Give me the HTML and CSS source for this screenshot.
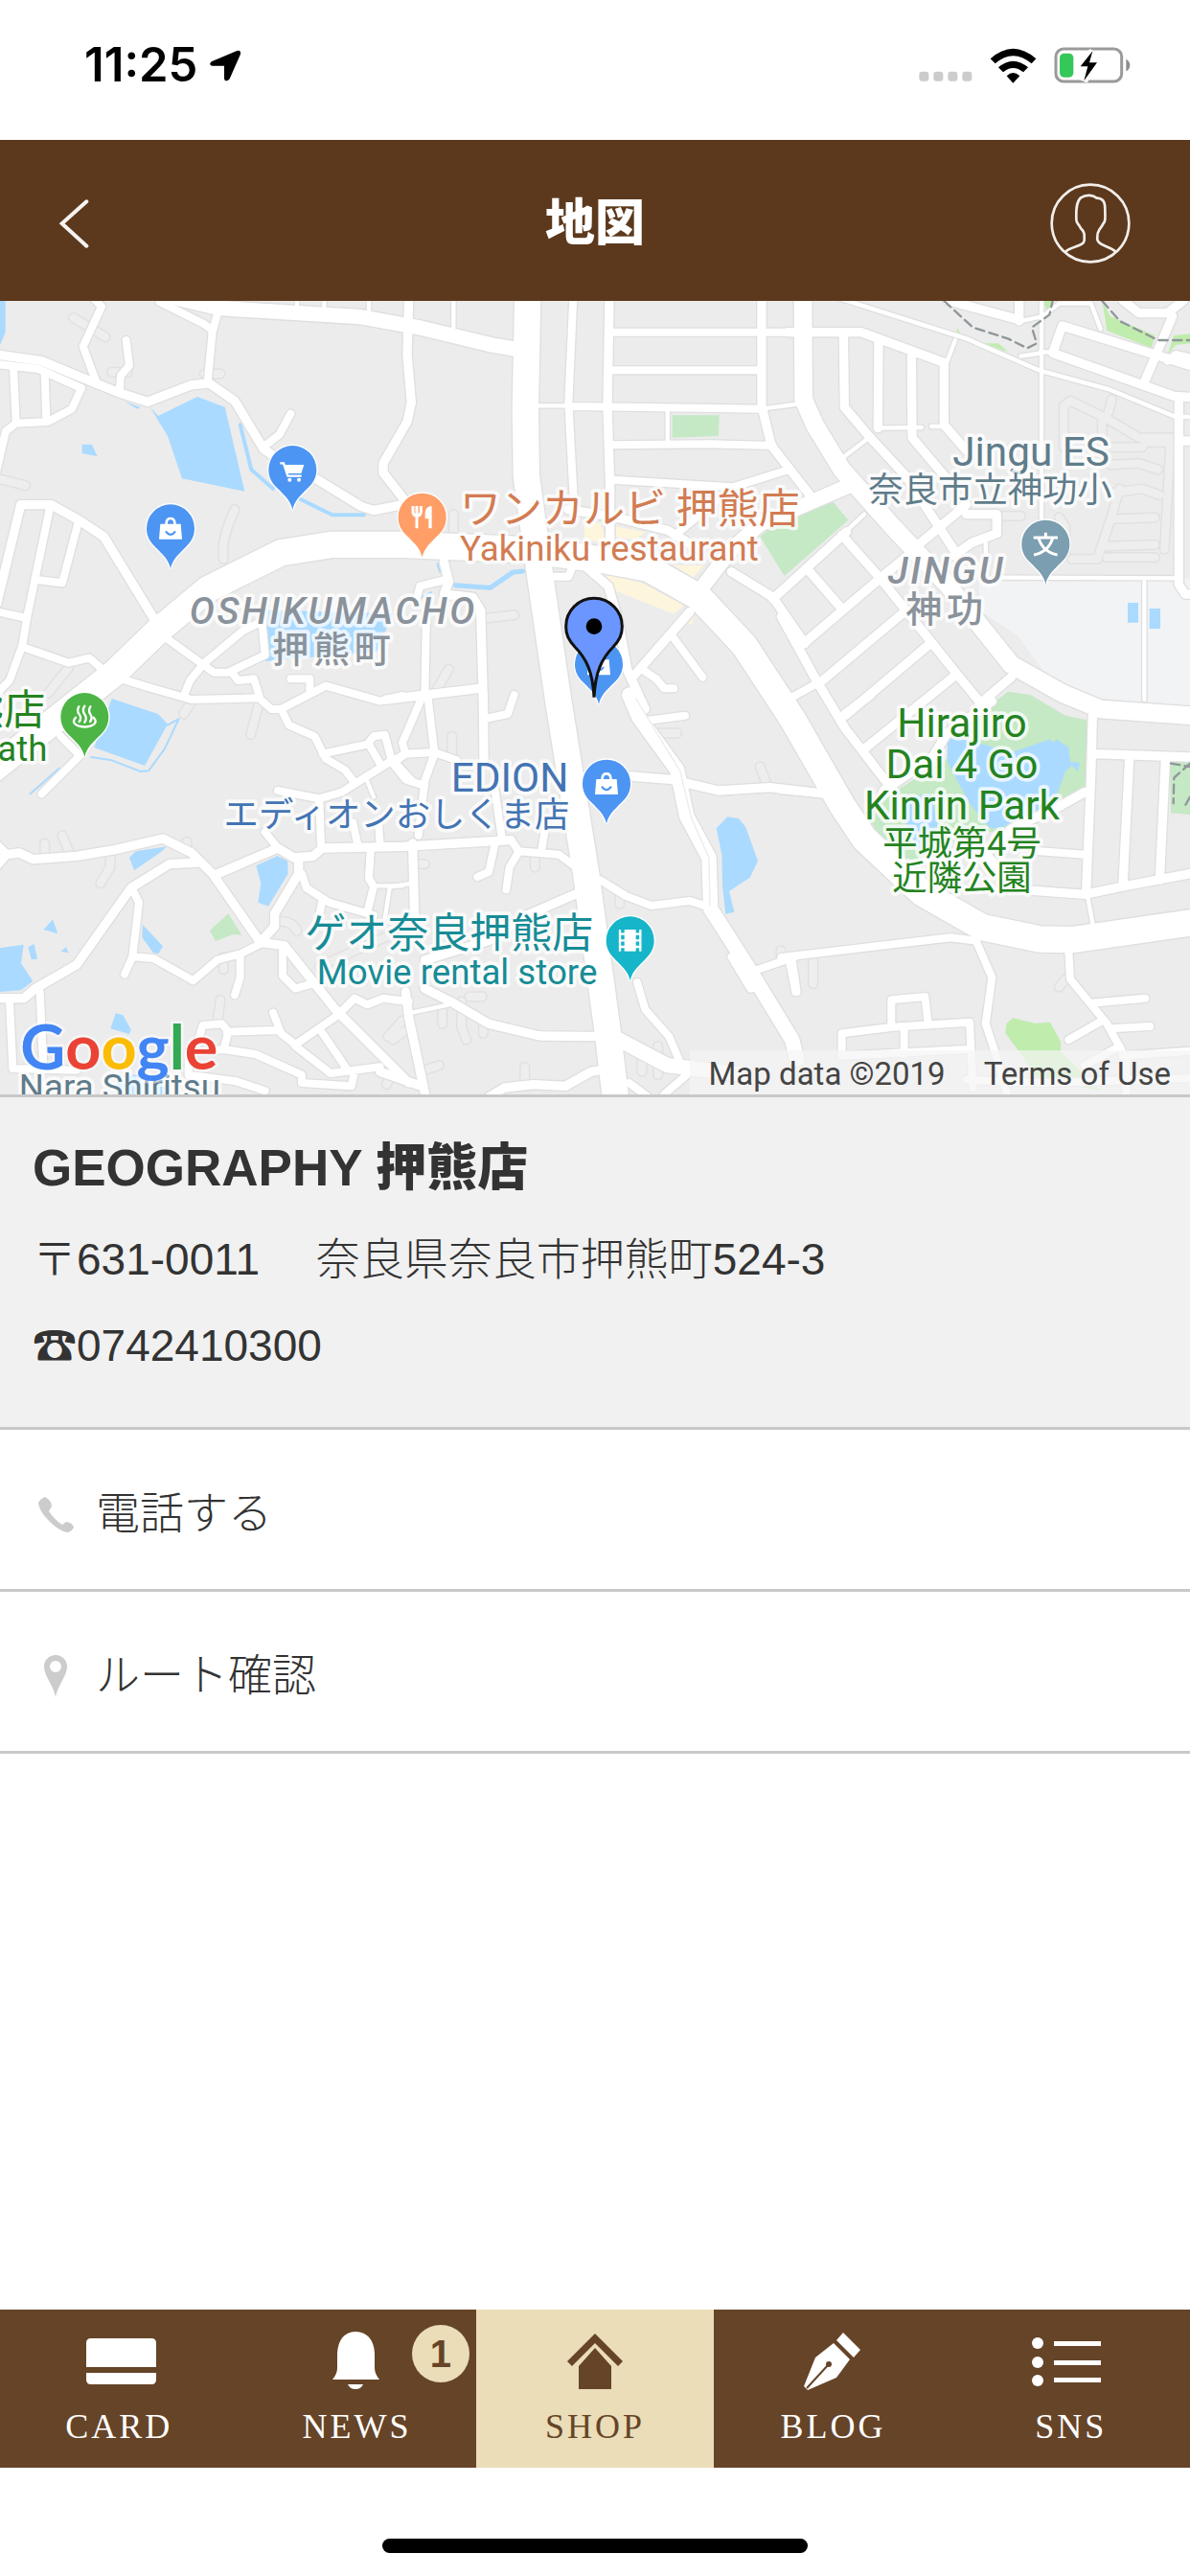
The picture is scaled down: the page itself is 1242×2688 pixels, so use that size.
FILE: index.html
```html
<!DOCTYPE html>
<html lang="ja">
<head>
  <meta charset="UTF-8">
  <meta name="viewport" content="width=device-width, initial-scale=1">
  <title>地図</title>
  <link rel="stylesheet" href="styles.css">
</head>
<body>
  <div class="status-bar">
    <div class="status-left">
      <span class="time">11:25</span>
      <svg class="icon-location" viewBox="510 34 102 98"><path d="M518 70 L596 37 Q611 32 609 47 L575 124 Q570 132 562 130 Q558 128 558 122 V84 H520 Q508 80 518 70Z"/></svg>
    </div>
    <div class="status-right">
      <svg class="icon-signal" viewBox="53 103 168 33" fill="#ccc">
        <rect x="54" y="105" width="30" height="30" rx="9"/>
        <rect x="99" y="105" width="30" height="30" rx="9"/>
        <rect x="144" y="105" width="30" height="30" rx="9"/>
        <rect x="189" y="105" width="30" height="30" rx="9"/>
      </svg>
      <svg class="icon-wifi" viewBox="273 25 147 111">
        <path d="M275 59 Q346 -4 418 59 L404 74 Q346 25 290 74Z"/>
        <path d="M300 86 Q346 46 393 86 L378 101 Q346 75 315 101Z"/>
        <path d="M326 113 Q346 93 367 113 L346 135Z"/>
      </svg>
      <svg class="icon-battery" viewBox="473 25 240 114">
        <rect x="479" y="31" width="206" height="102" rx="24" fill="none" stroke="#9a9a9a" stroke-width="9"/>
        <path d="M699 63 Q711 70 711 82 Q711 95 699 101Z" fill="#8e8e8e"/>
        <rect x="491" y="45" width="43" height="75" rx="14" fill="#34c759"/>
        <path d="M594 38 L556 86 H579 L567 131 L608 74 H584Z" stroke="#fff" stroke-width="22"/>
        <path d="M594 38 L556 86 H579 L567 131 L608 74 H584Z"/>
      </svg>
    </div>
  </div>

  <header class="header">
    <button class="header-btn" type="button" aria-label="戻る">
      <svg class="icon-back" viewBox="36 498 96 156"><path d="M121 508 L44 577 L121 647" fill="none" stroke="#f6f3f1" stroke-width="12" stroke-linecap="round"/></svg>
    </button>
    <h1>地図</h1>
    <button class="header-btn" type="button" aria-label="マイページ">
      <svg class="icon-user" viewBox="466 454 252 252" fill="none" stroke="#f3efec" stroke-width="8">
        <circle cx="592" cy="580" r="121"/>
        <path d="M514 669 C530 652 572 652 573 634 C574 612 573 606 562 596 C556 580 548 582 548 568 C548 548 545 516 562 500 C580 488 602 492 612 501 C640 503 638 525 638 540 C638 556 640 568 636 576 C630 584 628 590 620 600 C613 610 613 620 614 632 C618 650 650 650 672 669"/>
      </svg>
    </button>
  </header>

  <main>
    <section class="map">
      <svg class="map-canvas" viewBox="0 0 3726 2484" role="img" aria-label="押熊店 周辺地図">
        <defs>
          <path id="pin" d="M0 126 C-6 98 -22 84 -48 58 C-65 42 -75 24 -75 0 A75 75 0 0 1 75 0 C75 24 65 42 48 58 C22 84 6 98 0 126Z"/>
          <g id="bag">
            <path d="M-32 -14 H32 L36 34 H-36Z" fill="#fff"/>
            <path d="M-13 -12 V-18 Q-12 -31 0 -31 Q12 -31 13 -18 V-12" fill="none" stroke="#fff" stroke-width="8"/>
            <path d="M-15 9 Q0 30 15 9" fill="none" stroke="#4d95f3" stroke-width="6"/>
          </g>

          <!-- lanes and car parks -->
          <g id="lanes">
            <g transform="translate(0 -12)">
              <path d="M230 65 L330 125 M350 235 H400 M640 240 H690 M0 570 L80 590 M735 665 Q690 760 700 820 M215 1160 L150 1240"/>
            </g>
            <g transform="translate(1230 -12)">
              <path d="M295 1005 L380 995 M175 1165 L130 1240 M190 680 V760"/>
            </g>
            <g transform="translate(2466 -12)">
              <path d="M865 470 V340 L885 325 L990 375 L1100 440 L1200 440 L1180 790 M985 380 V440 M1015 320 L1005 360 M1010 470 L1110 470 L1120 455 H1180 M1010 525 L1100 520 L1160 540 M1020 612 L1110 600 L1165 620 M1020 695 L1150 690 M1000 780 L1150 775 M890 820 L970 820 L990 760 L1010 700 L1040 600 M1000 815 H1150 M850 690 L870 720 V800 M640 685 H730"/>
            </g>
            <g transform="translate(0 1233)">
              <path d="M345 500 L345 540 L315 590 M140 465 V500 M195 440 L215 490 M585 460 V490 M810 30 L785 125 M600 20 L575 60 M690 955 L680 1030 M700 820 V860 M870 710 Q915 705 930 740 M1260 1020 L1215 1070 M1000 850 L1250 740 M1210 1220 L1230 1180"/>
            </g>
            <g transform="translate(1230 1233)">
              <path d="M825 120 H890 M1150 225 L1170 280 M710 620 V655 M445 510 V540 M80 530 H100 M185 130 V190 M240 945 H280 M155 1030 V980 M215 960 L215 1040 L230 1080 M283 1060 V1030 M100 1175 L145 1160 M413 1165 V1210 M780 1180 V1140 M830 1190 V1100 M1215 800 V830 M0 1080 L40 1050"/>
            </g>
            <g transform="translate(2466 1233)">
              <path d="M80 830 V905 M870 890 L850 915"/>
            </g>
          </g>

          <g id="roads">
            <g transform="translate(0 -12)">
              <path class="md" d="M-10 180 L130 200 L300 270 L375 300 L462 328 L600 275 L655 270 L735 325 L825 475 L860 500 L1000 575 L1130 655 L1170 668 L1260 650"/>
              <path class="sm" d="M-10 210 L120 225 L255 285 L225 350 L150 390 L50 395 L18 420 L-10 540 M42 220 L50 390 M140 235 L145 385 M290 0 L318 30 L260 155 L300 262 M395 135 L405 215 L378 245 L374 295 M500 15 L640 85 L665 105 M680 55 L665 110 L650 265 M910 365 L875 430 L830 465"/>
              <path class="lg" d="M540 0 L690 35 L1130 62 L1320 97 L1540 150 L1640 167"/>
              <path class="xs" d="M930 0 V40 M1015 0 V40 M1155 0 V50"/>
              <path class="md" d="M-10 960 L65 650 L160 650 L250 700 L325 750 L490 1020"/>
              <path class="sm" d="M155 665 L85 1000 L70 1090 L30 1200 L-10 1240 M245 705 L195 895 L115 885 M-10 985 L85 1005 M70 1095 L215 1145 L280 1130 L320 1165 M510 1060 L670 1175 L715 1175 L830 1120 L820 1015 L760 1045 L640 1145 L595 1200 L575 1250 M730 1180 L745 1200 L795 1195 L812 1250 M380 1195 L460 1220 L600 1260 L810 1255 L850 1290 L880 1290 L1020 1217 L1190 1265 L1260 1248 M910 1195 L970 1195 L970 1240"/>
            </g>
            <g transform="translate(1230 -12)">
              <path class="md" d="M50 0 L45 180 L58 330 L45 390 L-30 520 L-30 550 L40 640 L150 770"/>
              <path class="sm" d="M565 0 L550 330 L568 665 M560 342 L1155 350 M680 110 H1280 M680 229 H1155 M680 463 L1000 460 L1190 465 M690 572 L1065 595 L1240 540 M890 740 L1010 640"/>
              <path class="md" d="M678 0 L672 340 L680 600 L680 770 M1155 0 L1155 340 L1185 465 L1310 625 M550 665 L700 690 L860 730 L960 790"/>
              <path class="xs" d="M455 340 H560 M1155 350 L1290 332 M860 350 V460 M190 0 V95"/>
              <path class="md" d="M600 840 L675 905 L705 1010 L735 1170 L790 1290 M930 985 L755 1185 M1060 860 L1190 940 L1290 1085 M1420 735 L1190 945"/>
              <path class="lg" d="M960 920 L1060 790 L1150 710 L1430 590"/>
              <path class="sm" d="M870 1055 L970 1190 M780 1165 L825 1195 L850 1225 L880 1225 M500 875 L550 875 L560 850 M85 905 L165 885 M85 905 L75 940 M105 980 L100 1250"/>
              <path class="md" d="M160 830 L175 890 L160 930 L250 940 L275 980 L283 1260 M-20 1260 L270 1225"/>
            </g>
            <g transform="translate(2466 -12)">
              <path class="ll" d="M48 0 L50 320 L85 400 L170 540 L330 720 L500 900 L700 1150 L860 1240 L980 1290 L1260 1310"/>
              <path class="md" d="M0 110 L230 110 L490 205 L490 400 L560 480 M175 110 L178 345 L250 430 L370 560 L520 790 M285 140 L283 410 M388 185 L390 440 L500 570 M500 10 L720 70 M725 15 V75 M1280 315 L1210 310 L830 175 L860 90 L1280 220 M1050 10 L1100 50 L1190 50 L1240 10 M1205 60 L1120 260"/>
              <path class="xs" d="M283 410 L420 408 M450 405 H490 M255 440 L170 505 M500 200 L525 135 M150 0 L560 130 L790 230 L1010 290 L1215 375 L1260 375 M795 15 V690 M730 75 L800 60 L850 20 L950 20 L980 100 M730 185 L795 175 M790 172 H830 M620 770 L622 870 M660 878 L1220 880 M1117 890 V1260 M240 680 L170 745"/>
              <path class="md" d="M1225 330 L1225 900 L1245 930 L1270 930 M1225 450 H1260 M560 680 L655 680 L655 740 L575 770 L520 810 M380 800 L560 650"/>
              <path class="md" d="M170 745 L290 880 L450 1080 L530 1180 L620 1290 M65 855 L165 970 M-20 1000 L90 1200 L180 1350 L330 1545 M50 1085 L290 880 L400 790 M110 1200 L360 990 M180 1310 L440 1090 M240 1415 L530 1180 M600 1275 L700 1190"/>
              <path class="sm" d="M0 1260 L100 1205 M1190 200 L1215 180 L1260 190"/>
            </g>
            <g transform="translate(0 1233)">
              <path class="md" d="M-10 470 L20 500 L60 495 L105 515 L240 505 L360 485 L510 450 L600 495 L665 560 L815 775 M-10 535 L20 500 M620 525 L530 530 L410 605 L240 845 L110 920 L75 950 L-10 950 M935 510 L935 560 L860 685 L860 725 L815 775 L890 785 L1050 985 L1280 1215"/>
              <path class="md" d="M670 565 L870 480 L920 510 L980 505 L1010 480 L1260 475 L1600 455"/>
              <path class="sm" d="M945 560 L960 605 L1030 650 L1170 690 M420 620 L435 650 L415 820 L390 875 M415 820 L480 825 L605 895 L680 830 L755 810 L815 780 M752 820 V885 L735 940 M885 790 L885 880 L925 920 L975 905 M855 995 L880 1060 L925 1095 L1055 1005 L1110 950 L1150 970 L1200 950 L1280 960 M30 960 L40 1170 M125 930 L135 1150 M40 1170 L240 1175 M600 1150 L635 1035 L695 1030 L715 1055 L700 1110 L590 1120 M710 1055 L870 1050 M700 1110 L800 1125 L945 1190 L945 1215 L1100 1225 L1110 1180 M590 1120 L590 1190 L740 1210 L830 1240 M925 1100 L1035 1185 L1190 1165 M1010 1060 L1085 1170"/>
              <path class="sm" d="M880 45 L905 95 L985 130 L1020 200 L1080 235 L1110 275 M1010 185 L1150 155 L1170 130 L1205 125 L1225 200 L1290 270 M1155 155 L1190 215 M870 300 L1000 325 L1070 305 L1220 210 L1270 185 M1000 330 L1005 470 M1105 400 L1120 470 M1185 400 L1190 470 M830 430 L870 480 M1160 490 L1155 575 L1170 600 L1150 680 M130 310 L250 190 L190 130 M1010 640 L1000 690"/>
              <path class="xs" d="M1150 270 L1170 320 M1180 598 H1260 M1220 605 L1205 700"/>
            </g>
            <g transform="translate(1230 1233)">
              <path class="sm" d="M110 10 L130 180 L200 205 M90 10 L30 150 L40 185 L130 180 M40 185 L0 215 L40 265 L100 285 M130 185 L100 270 L80 440 M290 75 L360 60 L380 0 M475 430 L465 490 M395 490 L365 540 L355 610 M320 465 L300 555 L265 570 M320 300 L340 440 M370 455 L395 490 L520 500 L580 545"/>
              <path class="md" d="M283 0 L285 200 M62 465 L68 700 M100 830 L300 770 L420 690 L580 620 M100 920 L190 965 L300 1030 L460 1068 L680 1070 M40 930 L50 1010 L105 1270 M-40 1180 L90 1225 M300 1260 L350 1230 L440 1220 L540 1225 L620 1180 L680 1170 M745 255 L870 265 L1020 300 L1180 290 L1356 310"/>
              <path class="xs" d="M0 600 L60 590 M60 995 L175 970 M0 960 H40"/>
              <path class="lg" d="M740 0 L770 70 L890 235 L920 380 L990 510 L995 670 L1040 740 L1110 850 L1250 1080 L1265 1140"/>
              <path class="sm" d="M800 80 L915 65 M650 580 L730 630 L810 660 L930 645 L990 665 M1060 820 L1120 920 L1150 910 M1130 865 L1260 820 M1250 830 L1265 930 M765 900 L790 985 L865 1070 L895 1140 M740 1215 L800 1260 M850 1250 L920 1190"/>
              <path class="lg" d="M690 1070 L860 1160 L1100 1190"/>
            </g>
            <g transform="translate(2466 1233)">
              <path class="md" d="M180 60 L260 0 M300 300 L450 200 L500 120 L640 20 M955 65 L950 250 L935 620 M930 305 L850 350 L700 420 L620 500 L730 610 L930 625 L1050 600 L1260 560 M1070 200 L1050 595 M1183 205 L1165 580 M965 185 L1260 195"/>
              <path class="sm" d="M790 490 L930 500 M-20 298 L120 310 M-20 822 L510 760 L590 770 L640 885 L620 1030 L650 1120 L690 1260 M5 830 L25 930 M880 800 L885 890 L1000 1030 L1060 1140 L1060 1250 M950 965 L1120 950 M1010 1045 L1135 1038 M880 1080 L985 1020 M930 1160 L1040 1100 M1050 1130 L1260 1115"/>
              <path class="sm" d="M170 1125 L170 1060 L330 1040 L570 1025 L580 1230 M325 1040 L325 955 L430 945 L440 1030 M365 1050 V1125 M170 1130 L560 1110 M560 1205 L800 1215 L1260 1200"/>
              <path class="xs" d="M940 635 L955 715"/>
            </g>
            <!-- trunk roads -->
            <path class="xl" d="M-30 1473 L355 1168 L500 1028 L650 903 L880 788 L1040 763 L1260 763 L1630 778 L1870 808 L2030 838 L2190 928 L2330 1078 L2481 1308 L2636 1578 L2706 1683 L2886 1853 L3076 1961 L3256 1998 L3356 2000 L3740 1945"/>
            <path class="xl" d="M1652 -10 L1645 338 L1648 548 L1695 888 L1748 1250 L1835 1793 L1902 2283 L1928 2500"/>
          </g>
        </defs>

        <rect width="3726" height="2484" fill="#ececec"/>

        <g class="school-ground">
          <path d="M3066 868 H3726 V1290 L3426 1270 L3290 1190 L3186 1048 L3066 968Z"/>
        </g>

        <use href="#lanes" class="lane-casing"/>
        <use href="#lanes" class="lane-fill"/>

        <g class="park">
          <path d="M2105 358 H2252 L2250 423 L2105 428Z"/>
          <path d="M2380 738 L2470 660 L2606 626 L2656 686 L2456 861Z"/>
          <path transform="translate(2466 1233)" d="M690 -10 L760 0 L870 65 L945 80 L935 290 L830 350 L700 410 L640 430 L560 440 L400 520 L370 510 L290 440 L240 370 L340 300 L500 200 L510 130Z"/>
          <path transform="translate(0 1233)" d="M657 738 L715 685 L757 752 L730 750 L675 771Z"/>
          <path d="M3663 1443 H3726 V1608 L3666 1603Z"/>
        </g>
        <g class="grass">
          <path transform="translate(2466 -12)" d="M985 10 L1010 60 L1150 120 L1140 160 L1000 105Z M1190 180 L1210 120 L1260 115 V145 L1215 150Z M610 145 L660 145 L690 172Z M530 95 L545 120 L530 120Z M800 12 L830 12 L815 50Z"/>
          <path transform="translate(2466 1233)" d="M685 1030 L705 1012 L775 1028 L822 1025 L855 1085 V1115 L980 1240 L780 1200 L735 1130 L682 1060Z"/>
        </g>
        <g class="commercial">
          <path transform="translate(1230 -12)" d="M600 710 L650 705 L670 770 L600 760Z M695 718 L790 735 L760 760 L695 750Z M640 860 L780 895 L912 965 L880 992 L700 920Z M880 840 H975 L940 878Z M925 1020 L945 1000 L935 1025Z"/>
        </g>
        <g class="water">
          <path transform="translate(0 -12)" d="M470 345 L495 372 L618 312 L704 344 L766 608 L570 568 L525 435Z M257 461 H287 L305 499 L257 489Z M0 12 H17 V110 L0 150Z M390 327 L440 345 L430 350Z M840 980 L1230 990 L1180 1110 L830 1140Z"/>
          <path transform="translate(0 1233)" d="M350 12 L495 60 L525 92 L453 222 L295 165Z M405 510 L425 490 L523 475 L500 495 L420 550Z M802 535 L868 505 L900 520 L902 560 L840 662 L808 650 L817 590Z M137 735 L165 703 L181 748Z M0 793 L74 782 L66 840 L103 897 L65 925 L0 930Z M88 790 L107 780 L117 828 L98 828Z M190 803 L207 790 L215 808Z M447 720 L510 787 L497 810 L480 808 L445 760Z M362 997 L385 1003 L410 1048 L405 1062 L346 1045Z M370 1190 H520 V1260 H360Z"/>
          <path transform="translate(1230 1233)" d="M1013 418 L1048 382 L1083 387 L1105 415 L1143 520 L1118 572 L1053 615 L1069 680 L1042 687 L1032 600 L1030 500Z"/>
          <path transform="translate(2466 1233)" d="M500 130 L560 140 L700 180 L820 140 L835 150 L840 138 L880 165 L885 210 L915 212 L908 240 L890 222 L870 240 L840 320 L780 370 L660 420 L630 415 L570 340 L500 210Z M370 320 L450 310 L470 410 L410 500 L370 400Z"/>
          <path d="M3531 945 h33 v62 h-33Z M3599 963 h34 v63 h-34Z"/>
        </g>
        <g class="stream">
          <path transform="translate(0 -12)" stroke-width="12" d="M752 400 L787 540 L855 600 M940 632 L1040 682 L1140 682"/>
          <path transform="translate(1230 -12)" stroke-width="15" d="M195 902 L305 910 L375 862 L407 858"/>
          <path transform="translate(1230 -12)" stroke-width="7" d="M140 835 L148 860 M80 945 L120 925"/>
          <path transform="translate(0 1233)" stroke-width="6" d="M285 195 L350 205 L440 240 L465 238 L515 170 L560 75 L525 95 M95 310 L185 230"/>
        </g>

        <use href="#roads" class="road-casing"/>
        <use href="#roads" class="road-fill"/>

        <path class="median" d="M1990 1243 L2130 1473 L2165 1620 L2220 1743 L2223 1893"/>
        <g class="boundary">
          <path transform="translate(2466 -12)" d="M490 12 L580 95 L690 130 L750 160 L780 145 L765 95 L820 55 L830 12 M985 12 L1040 75 L1160 135 L1260 135"/>
          <path transform="translate(2466 1233)" d="M1200 215 L1260 225 M1260 215 L1210 260 L1208 340 M1260 320 L1240 355"/>
        </g>

        <g class="label district">
          <text x="593" y="1010" letter-spacing="8">OSHIKUMACHO</text>
          <text class="jp" x="853" y="1131" letter-spacing="14">押熊町</text>
          <text x="2780" y="886" letter-spacing="8">JINGU</text>
          <text class="jp" x="2836" y="1004" letter-spacing="14">神功</text>
        </g>
        <g class="label food">
          <text class="jp-lg" x="1440" y="697">ワンカルビ 押熊店</text>
          <text class="sub" x="1440" y="813">Yakiniku restaurant</text>
        </g>
        <g class="label school">
          <text class="name" x="3474" y="516" text-anchor="end">Jingu ES</text>
          <text class="jp-sm" x="3482" y="629" text-anchor="end">奈良市立神功小</text>
        </g>
        <g class="label bath">
          <text class="jp-lg" x="142" y="1325" text-anchor="end">押熊店</text>
          <text class="sub" x="148" y="1440" text-anchor="end">Bath</text>
        </g>
        <g class="label shop">
          <text class="name" x="1780" y="1535" text-anchor="end">EDION</text>
          <text class="jp-sm" x="1783" y="1646" text-anchor="end">エディオンおしくま店</text>
        </g>
        <g class="label movie">
          <text class="jp-lg" x="1858" y="2025" text-anchor="end">ゲオ奈良押熊店</text>
          <text class="sub" x="1870" y="2138" text-anchor="end">Movie rental store</text>
        </g>
        <g class="label green" text-anchor="middle">
          <text class="name" x="3012" y="1366">Hirajiro</text>
          <text class="name" x="3012" y="1495">Dai 4 Go</text>
          <text class="name" x="3012" y="1623">Kinrin Park</text>
          <text class="jp-sm" x="3012" y="1736">平城第4号</text>
          <text class="jp-sm" x="3012" y="1845">近隣公園</text>
        </g>
        <g class="label school">
          <text class="sub" x="690" y="2498" text-anchor="end">Nara Shiritsu</text>
        </g>

        <g class="pin" fill="#4d95f3" transform="translate(916 528)">
          <use href="#pin"/>
          <path d="M-39 -20 H-28 L-15 20 H28" fill="none" stroke="#fff" stroke-width="7"/>
          <path d="M-24 -15 H36 L27 12 H-16Z" fill="#fff"/>
          <circle cx="-9" cy="32" r="6" fill="#fff"/>
          <circle cx="20" cy="32" r="6" fill="#fff"/>
        </g>
        <g class="pin" fill="#4d95f3" transform="translate(534 712)"><use href="#pin"/><use href="#bag"/></g>
        <g class="pin" fill="#4d95f3" transform="translate(1899 1511)"><use href="#pin"/><use href="#bag"/></g>
        <g class="pin" fill="#4d95f3" transform="translate(1875 1137)"><use href="#pin"/><use href="#bag"/></g>
        <g class="pin" fill="#ff9e67" transform="translate(1322 677)">
          <use href="#pin"/>
          <path d="M-29 -35 V-15 Q-27 -5 -17 -3 Q-6 -5 -4 -15 V-35 M-17 -35 V35" fill="none" stroke="#fff" stroke-width="9"/>
          <path d="M30 -35 V35 H20 V5 H9 V-15 Q12 -34 30 -35Z" fill="#fff"/>
        </g>
        <g class="pin" fill="#7b9eb0" transform="translate(3274 761)">
          <use href="#pin"/>
          <path d="M0 -36 V-22 M-38 -20 H38 M-22 -18 Q-8 26 37 34 M22 -18 Q8 26 -37 34" fill="none" stroke="#fff" stroke-width="9"/>
        </g>
        <g class="pin" fill="#4db546" transform="translate(265 1302)">
          <use href="#pin"/>
          <path d="M-18 -32 Q-26 -20 -17 -8 T-17 15 M0 -34 Q-9 -20 0 -8 T0 17 M18 -32 Q10 -20 18 -8 T17 15 M-28 2 Q-44 20 -18 29 Q0 34 18 29 Q44 20 28 2" fill="none" stroke="#fff" stroke-width="7" stroke-linecap="round"/>
        </g>
        <g class="pin" fill="#16b5c9" transform="translate(1973 2002)">
          <use href="#pin"/>
          <path d="M-32 -34 V34 M32 -34 V34 M-32 -20 H32 M-32 0 H32 M-32 20 H32" stroke="#fff" stroke-width="7"/>
          <rect x="-18" y="-34" width="36" height="68" fill="#fff"/>
        </g>
        <g transform="translate(1860 1019)">
          <path class="marker" d="M0 222 C-4 140 -25 100 -60 64 C-80 42 -88 26 -88 0 A88 88 0 0 1 88 0 C88 26 80 42 60 64 C25 100 4 140 0 222Z"/>
          <circle r="25"/>
        </g>

        <text class="google" x="64" y="2405"><tspan fill="#4285f4">G</tspan><tspan fill="#ea4335">o</tspan><tspan fill="#fbbc05">o</tspan><tspan fill="#4285f4">g</tspan><tspan fill="#34a853">l</tspan><tspan fill="#ea4335">e</tspan></text>
      </svg>
      <div class="attribution">
        <span>Map data ©2019</span>
        <a href="#">Terms of Use</a>
      </div>
    </section>

    <section class="shop-info">
      <h2>GEOGRAPHY 押熊店</h2>
      <p>〒631-0011 　奈良県奈良市押熊町524-3</p>
      <p>☎0742410300</p>
    </section>

    <ul class="actions">
      <li>
        <a href="tel:0742410300">
          <svg class="icon-action" viewBox="0 0 48 48"><path d="M6 12 Q8 8 13 6 Q20 10 20 16 Q18 19 17 21 Q23 30 31 35 L35 32 Q42 33 43 38 Q40 43 36 43 Q27 41 18 32 Q6 20 6 12Z" fill="#ccc"/></svg>
          電話する
        </a>
      </li>
      <li>
        <a href="#">
          <svg class="icon-action" viewBox="0 0 48 48"><path fill-rule="evenodd" d="M24 46 C22 34 12 24 12 14 A12 12 0 0 1 36 14 C36 24 26 34 24 46Z M24 8 A6 6 0 1 0 24 20 A6 6 0 1 0 24 8Z" fill="#ccc"/></svg>
          ルート確認
        </a>
      </li>
    </ul>
  </main>

  <nav class="tab-bar">
    <a href="#">
      <svg class="icon-tab" viewBox="0 0 90 66"><path d="M11 37 V12 Q11 7 16 7 H79 Q84 7 84 12 V37Z M11 43 H84 V50 Q84 55 79 55 H16 Q11 55 11 50Z"/></svg>
      CARD
    </a>
    <a href="#">
      <svg class="icon-tab" viewBox="0 0 90 66"><path d="M19 50 Q24 44 24 38 V23 Q25 1 43 0 Q62 1 63 23 V38 Q63 44 68 50Z M35 55 H51 Q49 60 43 60 Q37 60 35 55Z"/></svg>
      NEWS
      <span class="badge">1</span>
    </a>
    <a href="#" class="active">
      <svg class="icon-tab" viewBox="0 0 90 66"><path d="M45 2 L74 31 L69 36 L45 12 L21 36 L16 31Z M45 17 L62 36 V60 H28 V36Z"/></svg>
      SHOP
    </a>
    <a href="#">
      <svg class="icon-tab" viewBox="0 0 90 66">
        <path d="M56 1 L74 19 L67 27 L49 9Z M46 12 L63 29 L49 48 L19 61 L15 57 L27 27Z"/>
        <circle cx="41" cy="34" r="3" fill="#664428"/>
        <path d="M41 34 L18 59" stroke="#664428" stroke-width="2"/>
      </svg>
      BLOG
    </a>
    <a href="#">
      <svg class="icon-tab" viewBox="0 0 90 66">
        <path d="M27 10 H76 V15 H27Z M27 30 H76 V35 H27Z M27 48 H76 V53 H27Z"/>
        <circle cx="10" cy="12" r="6"/>
        <circle cx="10" cy="32" r="6"/>
        <circle cx="10" cy="51" r="6"/>
      </svg>
      SNS
    </a>
  </nav>
  <div class="home-area"><div class="home-indicator"></div></div>
</body>
</html>
```
FILE: styles.css
```css
* {
  box-sizing: border-box;
}

body {
  margin: 0;
  min-height: 100vh;
  display: flex;
  flex-direction: column;
  background: #fff;
  color: #333;
  font-family: "Liberation Sans", "Noto Sans CJK JP", sans-serif;
  font-size: 46px;
  font-weight: 300;
}

a {
  color: inherit;
  text-decoration: none;
}

svg {
  display: block;
}

/* status bar */
.status-bar {
  display: flex;
  justify-content: space-between;
  align-items: flex-start;
  height: 146px;
  padding: 48px 62px 0 88px;
}

.status-left,
.status-right {
  display: flex;
  align-items: center;
  height: 40px;
}

.time {
  font-family: Inter, sans-serif;
  font-weight: 600;
  font-size: 49px;
  line-height: 40px;
  color: #000;
}

.icon-location {
  width: 34px;
  height: 33px;
  margin-left: 12px;
}

.icon-signal {
  width: 56px;
  height: 11px;
  align-self: flex-end;
  margin-bottom: 3px;
}

.icon-wifi {
  width: 49px;
  height: 37px;
  margin-left: 18px;
}

.icon-battery {
  width: 80px;
  height: 38px;
  margin-left: 18px;
}

/* header */
.header {
  display: flex;
  justify-content: space-between;
  align-items: center;
  height: 168px;
  padding: 0 62px;
  background: #5c391d;
}

.header h1 {
  margin: 0 0 4px;
  font-size: 52px;
  font-weight: 900;
  color: #fff;
}

.header-btn {
  display: flex;
  width: 84px;
  margin-top: 6px;
  padding: 0;
  border: none;
  background: none;
  cursor: pointer;
}

.icon-back {
  width: 32px;
  height: 52px;
}

.icon-user {
  width: 84px;
  height: 84px;
}

/* map */
main {
  flex: 1;
}

.map {
  position: relative;
  border-bottom: 3px solid #c8c8c8;
}

.map-canvas {
  width: 100%;
  height: auto;
}

.road-casing {
  --road: #dfdfdf;
  --case: 8px;
}

.road-fill {
  --road: #fff;
  --case: 0px;
}

#roads path {
  fill: none;
  stroke: var(--road);
  stroke-linejoin: round;
  stroke-linecap: round;
}

#roads .xs { stroke-width: calc(13px + var(--case)); }
#roads .sm { stroke-width: calc(24px + var(--case)); }
#roads .md { stroke-width: calc(28px + var(--case)); }
#roads .lg { stroke-width: calc(46px + var(--case)); }
#roads .ll { stroke-width: calc(56px + var(--case)); }
#roads .xl { stroke-width: calc(82px + var(--case)); }

.lane-casing,
.lane-fill,
.stream,
.boundary {
  fill: none;
  stroke-linejoin: round;
  stroke-linecap: round;
}

.lane-casing {
  stroke: #e1e1e1;
  stroke-width: 34px;
}

.lane-fill {
  stroke: #eee;
  stroke-width: 25px;
}

.stream {
  stroke: #aadaff;
}

.boundary {
  stroke: #90979b;
  stroke-width: 7px;
  stroke-dasharray: 28 16;
}

.median {
  fill: none;
  stroke: #ececec;
  stroke-width: 4px;
}

.water { fill: #aadaff; }
.park { fill: #c5e8c5; }
.grass { fill: #c0ecae; }
.commercial { fill: #fdf5dc; }
.school-ground { fill: #f1f3f5; }

.label {
  font-family: Roboto, "Noto Sans CJK JP", sans-serif;
  font-weight: 400;
  stroke: rgba(255, 255, 255, 0.75);
  stroke-width: 22px;
  stroke-linejoin: round;
  paint-order: stroke;
}

.label .name { font-size: 127px; }
.label .sub { font-size: 110px; }
.label .jp-lg { font-size: 129px; }
.label .jp-sm { font-size: 109px; }

.district {
  fill: #8a929b;
  font-size: 117px;
  font-style: italic;
  font-weight: 500;
}

.district .jp {
  font-size: 114px;
  font-style: normal;
}

.food { fill: #d27c52; }
.school { fill: #5f7c8a; }
.bath { fill: #24831f; }
.shop { fill: #4374b4; }
.movie { fill: #168c96; }
.green { fill: #24831f; }

.pin > use:first-child {
  stroke: #fff;
  stroke-width: 8px;
  paint-order: stroke;
}

.marker {
  fill: #6b96ff;
  stroke: #111;
  stroke-width: 9px;
}

.google {
  font-family: Lato, sans-serif;
  font-size: 194px;
  font-weight: 700;
  stroke: rgba(255, 255, 255, 0.5);
  stroke-width: 16px;
  paint-order: stroke;
}

.attribution {
  position: absolute;
  right: 0;
  bottom: 0;
  display: flex;
  gap: 40px;
  padding: 3px 20px 0;
  background: rgba(245, 245, 245, 0.7);
  font-family: Roboto, sans-serif;
  font-weight: 400;
  font-size: 33px;
  line-height: 43px;
  color: #444;
}

/* shop details */
.shop-info {
  padding: 38px 34px 50px;
  background: #f1f1f1;
  border-bottom: 3px solid #c8c8c8;
}

.shop-info h2 {
  margin: 0 0 4px;
  font-size: 53px;
  font-weight: 900;
  line-height: 72px;
}

.shop-info p {
  margin: 0;
  padding-top: 20px;
  line-height: 70px;
}

.actions {
  margin: 0;
  padding: 0;
  list-style: none;
}

.actions a {
  display: flex;
  align-items: center;
  gap: 18px;
  height: 169px;
  padding: 0 34px;
  border-bottom: 3px solid #c8c8c8;
}

.icon-action {
  width: 48px;
  height: 48px;
  margin-top: 10px;
}

/* bottom tabs */
.tab-bar {
  display: flex;
  height: 165px;
  background: #664428;
}

.tab-bar a {
  position: relative;
  flex: 1;
  display: flex;
  flex-direction: column;
  align-items: center;
  gap: 13px;
  padding-top: 23px;
  color: #fff;
  font-family: "Liberation Serif", serif;
  font-size: 36px;
  line-height: 40px;
  letter-spacing: 3px;
}

.tab-bar .active {
  background: #eaddb8;
  color: #664428;
}

.icon-tab {
  width: 90px;
  height: 66px;
  fill: currentColor;
}

.badge {
  position: absolute;
  top: 16px;
  right: 7px;
  width: 60px;
  border-radius: 50%;
  background: #eaddb8;
  color: #664428;
  font-family: "Liberation Sans", sans-serif;
  font-weight: bold;
  font-size: 40px;
  line-height: 60px;
  letter-spacing: 0;
  text-align: center;
}

.home-area {
  height: 113px;
  padding-top: 74px;
}

.home-indicator {
  width: 444px;
  height: 15px;
  margin: 0 auto;
  border-radius: 8px;
  background: #000;
}
```
